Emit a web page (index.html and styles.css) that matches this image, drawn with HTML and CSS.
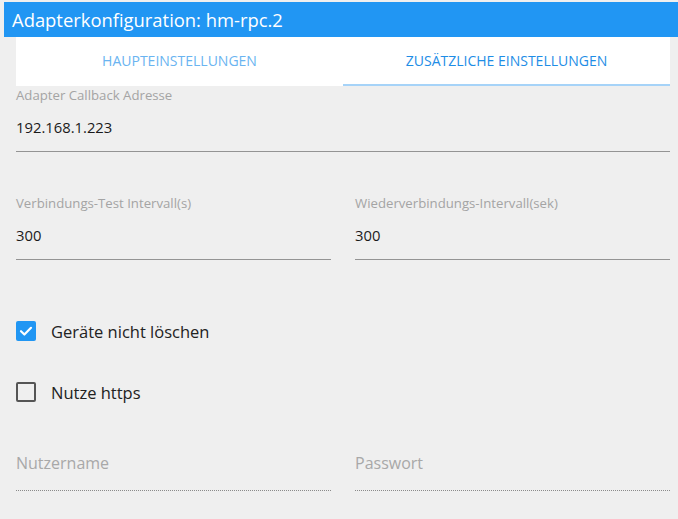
FILE: index.html
```html
<!DOCTYPE html>
<html>
<head>
<meta charset="utf-8">
<link rel="stylesheet" href="styles.css">
</head>
<body>
<div class="header">Adapterkonfiguration: hm-rpc.2</div>
<div class="content">
  <div class="tabs">
    <div class="tab">HAUPTEINSTELLUNGEN</div>
    <div class="tab active">ZUSÄTZLICHE EINSTELLUNGEN</div>
  </div>
  <div class="field full">
    <div class="label">Adapter Callback Adresse</div>
    <div class="value">192.168.1.223</div>
  </div>
  <div class="row row2">
    <div class="field">
      <div class="label">Verbindungs-Test Intervall(s)</div>
      <div class="value">300</div>
    </div>
    <div class="field">
      <div class="label">Wiederverbindungs-Intervall(sek)</div>
      <div class="value">300</div>
    </div>
  </div>
  <div class="check c1">
    <span class="box checked"><svg viewBox="0 0 20 20" width="20" height="20"><path d="M5 10.2 L8.4 13.5 L15 6.8" fill="none" stroke="#fff" stroke-width="2.2" stroke-linecap="round" stroke-linejoin="round"/></svg></span>
    <span class="clabel">Geräte nicht löschen</span>
  </div>
  <div class="check c2">
    <span class="box"></span>
    <span class="clabel">Nutze https</span>
  </div>
  <div class="row row3">
    <div class="field disabled">
      <div class="placeholder">Nutzername</div>
    </div>
    <div class="field disabled">
      <div class="placeholder">Passwort</div>
    </div>
  </div>
</div>
</body>
</html>
```
FILE: styles.css
```css
html, body {
  margin: 0;
  padding: 0;
  background: #efefef;
  font-family: "Open Sans", "Noto Sans", sans-serif;
}
.header {
  margin: 2px 0 0 4px;
  height: 35px;
  background: #2196f3;
  color: #fff;
  font-size: 18.4px;
  line-height: 35px;
  padding-left: 8px;
}
.content {
  padding: 0 8px 0 16px;
}
.tabs {
  display: flex;
  background: #fff;
  height: 49px;
}
.tab {
  flex: 1;
  text-align: center;
  font-size: 14px;
  line-height: 47px;
  color: #6ab4f1;
  border-bottom: 2px solid transparent;
}
.tab.active {
  color: #1e8de6;
  border-bottom-color: #a6d3f8;
}
.label {
  font-size: 13.2px;
  color: #a4a4a4;
  line-height: 16px;
}
.value {
  font-size: 14.8px;
  color: #1a1a1a;
  line-height: 20px;
  padding: 14px 0 14px;
  border-bottom: 1px solid #949494;
}
.full {
  margin-top: 1px;
}
.row {
  display: flex;
  gap: 24px;
}
.row .field {
  flex: 1;
}
.row2 {
  margin-top: 43px;
}
.check {
  display: flex;
  align-items: center;
  height: 24px;
}
.c1 {
  margin-top: 59px;
}
.c2 {
  margin-top: 37px;
}
.box {
  width: 16px;
  height: 16px;
  border: 2px solid #555;
  border-radius: 2px;
  box-sizing: content-box;
  margin-right: 15px;
  display: flex;
}
.box.checked {
  width: 20px;
  height: 20px;
  border: none;
  background: #2196f3;
}
.clabel {
  font-size: 16.5px;
  color: #222;
}
.row3 {
  margin-top: 49px;
}
.placeholder {
  font-size: 16px;
  color: #a8a8a8;
  line-height: 20px;
  padding-bottom: 17px;
  border-bottom: 1px dotted #8a8a8a;
}
```
